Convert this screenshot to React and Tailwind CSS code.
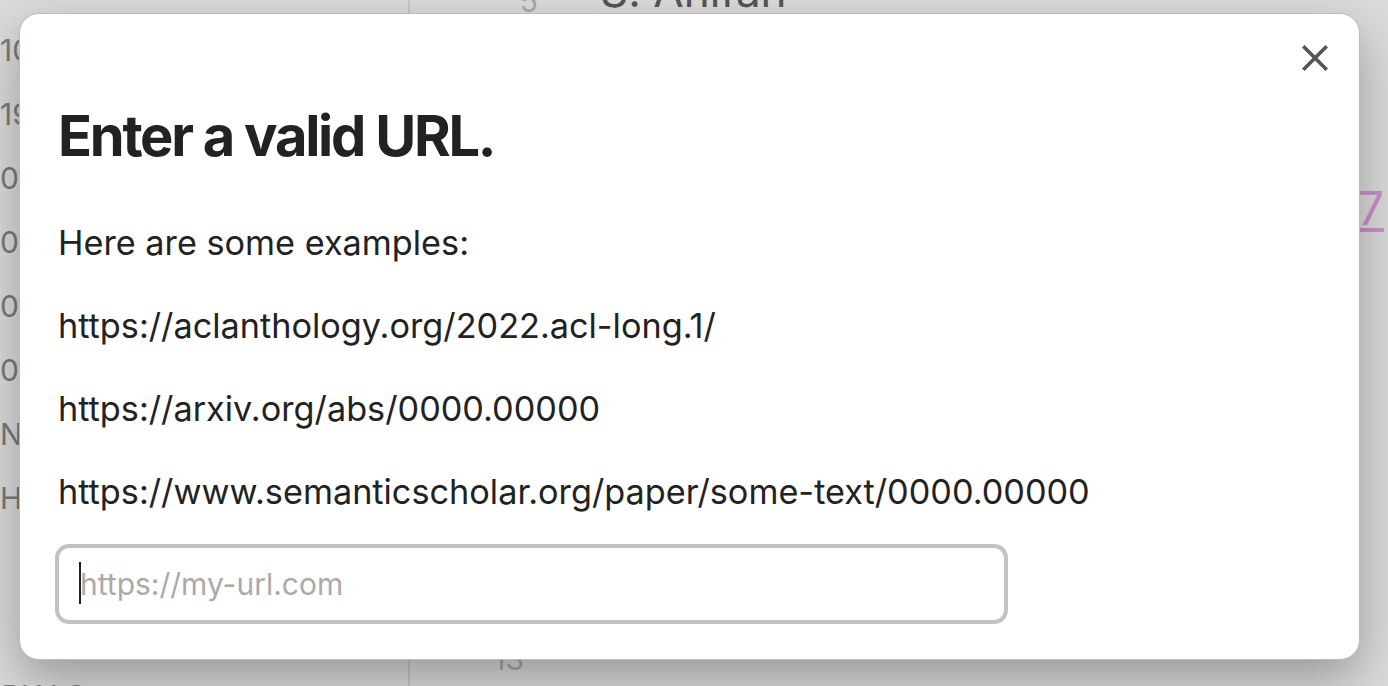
import React, { useState } from 'react';

const sideItems = ['10', '19', '05', '08', '09', '04', 'NO', 'HE'];

const examples = [
  'https://aclanthology.org/2022.acl-long.1/',
  'https://arxiv.org/abs/0000.00000',
  'https://www.semanticscholar.org/paper/some-text/0000.00000',
];

const App = () => {
  const [url, setUrl] = useState('');

  return (
    <div className="relative w-[1388px] h-[686px] overflow-hidden bg-[#dbdbdb] font-['Inter','Liberation_Sans',sans-serif]">
      {/* page behind the dialog */}
      <div className="flex h-full">
        <div className="w-[410px] shrink-0 border-r-2 border-[#c6c6c6] flex flex-col pt-[30px] text-[30px] leading-[40px] text-[#7a7a7a]">
          {sideItems.map((s) => (
            <div key={s} className="h-[64px] whitespace-nowrap">{s}</div>
          ))}
          <div className="mt-auto -mb-[30px] -ml-[18px] whitespace-nowrap">TRIALS</div>
        </div>
        <div className="flex-1 flex flex-col">
          <div className="flex items-end -mt-[26px] h-[50px] whitespace-nowrap">
            <span className="w-[128px] text-right text-[30px] text-[#a9a9a9]">5</span>
            <span className="ml-[62px] text-[44px] text-[#555]">S. Anifah</span>
          </div>
          <div className="flex justify-end mt-[150px] mr-[4px]">
            <span className="text-[46px] text-[#cc8fcc] underline">07</span>
          </div>
          <div className="mt-auto mb-[4px] w-[114px] text-right text-[30px] text-[#a9a9a9]">13</div>
        </div>
      </div>

      {/* dialog */}
      <div className="absolute left-[19px] top-[13px] w-[1341px] h-[647px] bg-white rounded-[20px] border border-[#bcbcbc] shadow-[0_20px_50px_rgba(0,0,0,0.3)] px-[35px] pt-[88px]">
        <button className="absolute top-[31px] right-[31px] w-[26px] h-[26px] text-[#555]">
          <svg viewBox="0 0 26 26" width="26" height="26" fill="none" stroke="currentColor" strokeWidth="3.6" strokeLinecap="square">
            <path d="M2.5 2.5L23.5 23.5M23.5 2.5L2.5 23.5" />
          </svg>
        </button>
        <h1 className="pl-[3px] text-[56px] leading-[68px] font-bold tracking-[-0.04em] text-[#222]">
          Enter a valid URL.
        </h1>
        <div className="mt-[47px] flex flex-col gap-[32px] pl-[3px] text-[34.25px] leading-[51px] text-[#222]">
          <p>Here are some examples:</p>
          {examples.map((e) => (
            <p key={e}>{e}</p>
          ))}
        </div>
        <div className="relative mt-[27px] w-[953px]">
          <input
            type="text"
            value={url}
            onChange={(e) => setUrl(e.target.value)}
            placeholder="https://my-url.com"
            className="block w-full h-[80px] border-4 border-[#c2c2c2] rounded-[14px] pl-[21px] text-[30px] text-[#222] placeholder:text-[#aaa] outline-none caret-[#222]"
          />
          {url === '' && (
            <span className="absolute left-[24px] top-[18px] w-[2px] h-[42px] bg-[#222] pointer-events-none" />
          )}
        </div>
      </div>
    </div>
  );
};

export default App;
